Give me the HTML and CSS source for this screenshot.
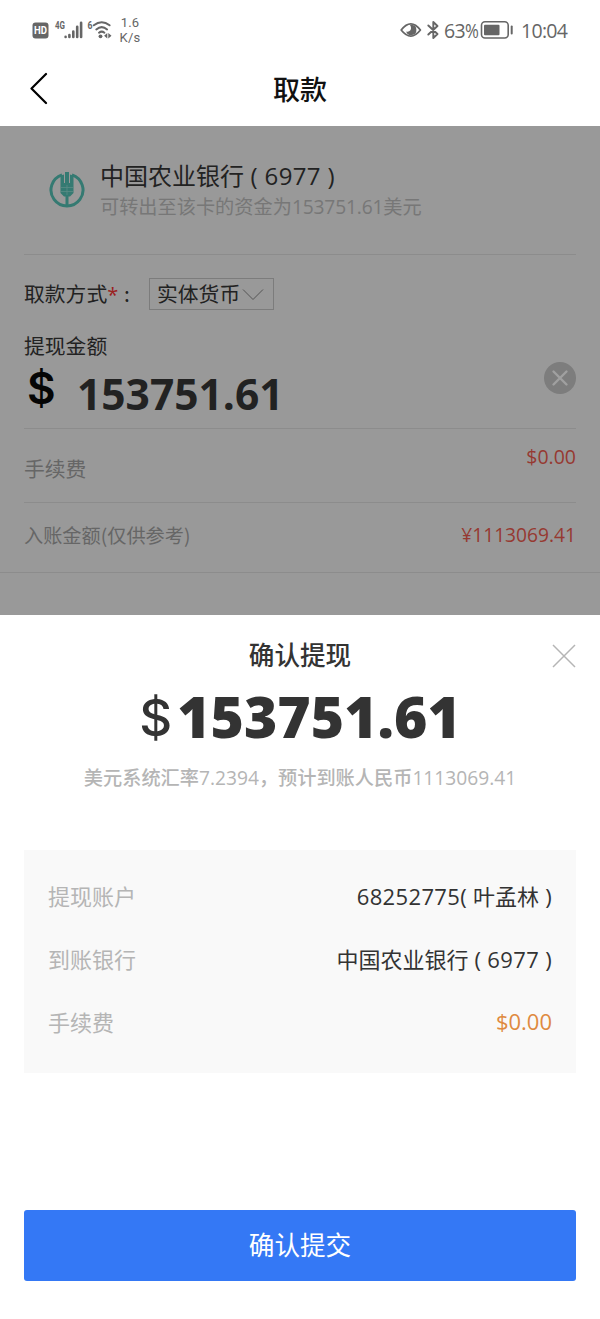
FILE: index.html
```html
<!DOCTYPE html>
<html lang="zh-CN">
<head>
<meta charset="utf-8">
<title>取款</title>
<link rel="stylesheet" href="styles.css">
</head>
<body>
<header class="status">
  <div class="status-left">
    <svg class="radio" width="82" height="24" viewBox="0 0 82 24">
      <rect x="1.500" y="4.500" width="16" height="16" rx="3" fill="#666"/>
      <text x="9.500" y="16.400" class="hd" text-anchor="middle" textLength="13" lengthAdjust="spacingAndGlyphs">HD</text>
      <text x="24" y="11" class="tiny" textLength="10" lengthAdjust="spacingAndGlyphs">4G</text>
      <g stroke="#666" stroke-width="2.600" stroke-linecap="round">
        <path d="M34.600 18.900v.1M38.400 17v2M42.300 13.500v5.500M46.200 8.800v10.200M50.100 4.700v14.300"/>
      </g>
      <text x="56.500" y="11" class="tiny" textLength="5" lengthAdjust="spacingAndGlyphs">6</text>
      <g fill="none" stroke="#666" stroke-width="2" stroke-linecap="round">
        <path d="M62.800 7.300q7.900-6 15.800 0M65.300 11.400q5.400-4.500 10.800 0M68 14.700q2.700-2.200 5.400 0"/>
      </g>
      <circle cx="69.500" cy="18.300" r="1.900" fill="#666"/>
      <path d="M76.300 15v5.400l-3.200-2.700zM77.300 15v5.400l3.200-2.700z" fill="#666"/>
    </svg>
    <div class="speed"><span>1.6</span><span>K/s</span></div>
  </div>
  <div class="status-right">
    <svg width="42" height="24" viewBox="0 0 42 24">
      <path d="M1.200 12Q10.800-.3 20.400 12Q10.800 24.300 1.200 12z" fill="none" stroke="#666" stroke-width="1.800" stroke-linejoin="round"/>
      <path d="M11.500 6.800a5.200 5.200 0 1 1-5.300 6.600q2.400.8 4-.8 1.800-2.400-.2-5.500z" fill="#666"/>
      <path d="M28.300 7.500l9.200 8.500-4.200 4V4l4.200 4-9.200 8.500" fill="none" stroke="#666" stroke-width="1.900" stroke-linejoin="round" stroke-linecap="round"/>
    </svg>
    <span class="pct">63<span class="percent">%</span></span>
    <svg width="34" height="20" viewBox="0 0 34 20">
      <rect x="1.500" y="1.700" width="26.700" height="16.300" rx="3.500" fill="none" stroke="#666" stroke-width="1.600"/>
      <rect x="4" y="4.700" width="15.500" height="10.600" rx="1" fill="#666"/>
      <path d="M31.700 6.500v7" stroke="#666" stroke-width="2" stroke-linecap="round"/>
    </svg>
    <span class="time">10:04</span>
  </div>
</header>
<nav class="nav">
  <svg class="back" width="20" height="34" viewBox="0 0 20 34"><path d="M16 3L1.500 17.500 16 32" fill="none" stroke="#000" stroke-width="2.200" stroke-linecap="round" stroke-linejoin="round"/></svg>
  <h1 class="nav-title">取款</h1>
</nav>
<main class="page">
  <section class="bank">
    <svg class="bank-logo" width="36" height="36" viewBox="0 0 36 36">
      <path d="M13 2.800a16 16 0 1 0 10 0" fill="none" stroke="#357a72" stroke-width="3"/>
      <path d="M16 0h4v11h1V2.500l3.500 1V21L21 24.500h-1.500v9h-3v-9H15L11.500 21V3.500l3.500-1V11h1z" fill="#357a72"/>
      <path d="M12 15.500h12M12 19.500h12M18 13v10" stroke="#5b8b85" stroke-width=".8"/>
    </svg>
    <div class="bank-info">
      <div class="bank-name">中国农业银行<span class="num wide"> ( 6977 )</span></div>
      <div class="bank-sub">可转出至该卡的资金为<span class="num">153751.61</span>美元</div>
    </div>
  </section>
  <section class="method">
    <span class="method-label">取款方式<b class="star">*</b></span><span class="colon">:</span>
    <span class="select">实体货币<svg width="22" height="14" viewBox="0 0 22 14"><path d="M1 1.500l10 10 10-10" fill="none" stroke="#555" stroke-width="1"/></svg></span>
  </section>
  <section class="amount">
    <div class="amount-label">提现金额</div>
    <div class="amount-row">
      <span class="amount-sign">$</span><span class="amount-value">153751.61</span>
      <svg class="clear" width="32" height="32" viewBox="0 0 32 32"><circle cx="16" cy="16" r="16" fill="#7d7d7d"/><path d="M9.500 9.500l13 13M22.500 9.500l-13 13" stroke="#a0a0a0" stroke-width="2.400" stroke-linecap="round"/></svg>
    </div>
  </section>
  <section class="fee"><span class="fee-label">手续费</span><span class="fee-value">$0.00</span></section>
  <section class="credit"><span>入账金额(仅供参考)</span><span class="credit-value">¥1113069.41</span></section>
</main>
<section class="sheet">
  <div class="sheet-head">
    <h2 class="sheet-title">确认提现</h2>
    <svg class="close" width="24" height="24" viewBox="0 0 24 24"><path d="M1 1l22 22M23 1L1 23" stroke="#b5b5b5" stroke-width="1.500"/></svg>
  </div>
  <div class="total"><span class="total-sign">$</span><span class="total-value">153751.61</span></div>
  <p class="note">美元系统汇率<span class="num">7.2394</span>，预计到账人民币<span class="num">1113069.41</span></p>
  <dl class="details">
    <div class="row"><dt>提现账户</dt><dd><span class="num wide">68252775( </span>叶孟林<span class="num wide"> )</span></dd></div>
    <div class="row"><dt>到账银行</dt><dd>中国农业银行<span class="num wide"> ( 6977 )</span></dd></div>
    <div class="row"><dt>手续费</dt><dd class="orange">$0.00</dd></div>
  </dl>
  <button class="submit">确认提交</button>
</section>
</body>
</html>
```
FILE: styles.css
```css
* { box-sizing: border-box; }
body {
  margin: 0;
  width: 600px;
  height: 1319px;
  background: #fff;
  color: #333;
  font-family: "Noto Sans CJK SC", sans-serif;
  overflow: hidden;
}
h1, h2, p, dl, dd { margin: 0; font-weight: 400; }
.num { font-family: "Open Sans", "Noto Sans CJK SC", sans-serif; }
.wide { letter-spacing: .35px; }
.status {
  height: 60px;
  padding: 0 33px 0 31px;
  display: flex;
  align-items: center;
  justify-content: space-between;
  color: #666;
}
.status-left, .status-right { display: flex; align-items: center; }
.radio { margin-top: -1px; }
.hd { font: 700 10.500px Roboto, sans-serif; fill: #fff; }
.tiny { font: 700 10px Roboto, sans-serif; fill: #666; }
.speed {
  margin-left: 7px;
  width: 20px;
  display: flex;
  flex-direction: column;
  align-items: center;
  font: 13px/15px Roboto, sans-serif;
  letter-spacing: .2px;
}
.pct, .time { font: 19.500px/24px "Open Sans", sans-serif; margin-top: 1px; }
.pct { margin-left: 2px; width: 36px; letter-spacing: -.600px; white-space: nowrap; }
.percent { display: inline-block; transform: scaleX(.86); transform-origin: 0 50%; }
.time { margin-left: 7px; width: 46px; letter-spacing: -.700px; white-space: nowrap; }
.nav {
  height: 66px;
  padding: 11px 30px 0;
  display: grid;
  grid-template-columns: 20px 1fr 20px;
  align-items: start;
}
.nav-title { font-size: 27px; font-weight: 500; line-height: 36px; text-align: center; color: #111; }
.page {
  height: 489px;
  padding: 0 24px;
  background: #999;
  color: #222;
}
.bank { height: 129px; padding: 33px 0 0 25px; display: flex; border-bottom: 1px solid #8c8c8c; }
.bank-logo { margin: 13px 15px 0 0; }
.bank-name { font-size: 24px; line-height: 32px; }
.bank-sub { font-size: 19.200px; line-height: 28px; color: #777; }
.bank-sub .num { letter-spacing: -.15px; }
.method { height: 75px; padding-top: 23px; display: flex; font-size: 20.800px; line-height: 30px; }
.star { font: 500 20px/20px "Open Sans", sans-serif; color: #9b2020; }
.colon { width: 32px; padding-left: 7px; }
.method-label { width: 93px; white-space: nowrap; }
.select {
  width: 125px;
  height: 32px;
  padding: 0 0 2px 7px;
  border: 1px solid #7c7c7c;
  display: flex;
  align-items: center;
  gap: 2px;
  line-height: 28px;
}
.select svg { margin-top: 4px; }
.amount { height: 99px; border-bottom: 1px solid #8c8c8c; }
.amount-label { font-size: 20.800px; line-height: 30px; }
.amount-row { height: 68px; display: flex; align-items: flex-start; }
.amount-sign { width: 53px; padding-left: 3px; font: 600 44px/56px Inter, sans-serif; color: #050505; }
.amount-value { flex: 1; font: 700 42.500px/67px "Open Sans", sans-serif; }
.clear { margin-top: 2px; }
.fee {
  height: 74px;
  padding: 12px 0 0;
  display: flex;
  justify-content: space-between;
  border-bottom: 1px solid #8c8c8c;
  font-size: 20.800px;
}
.fee-label { padding-top: 11px; line-height: 32px; color: #666; }
.fee-value, .credit-value { font-family: "Open Sans", sans-serif; font-size: 19.500px; line-height: 32px; color: #963932; }
.credit-value { font-size: 19.200px; }
.credit {
  height: 70px;
  margin: 0 -24px;
  padding: 16px 24px;
  display: flex;
  justify-content: space-between;
  border-bottom: 1px solid #8c8c8c;
  font-size: 19.200px;
  line-height: 32px;
  color: #666;
}
.sheet { height: 704px; padding: 22px 24px 38px; display: flex; flex-direction: column; }
.sheet-head { display: grid; grid-template-columns: 24px 1fr 24px; align-items: center; height: 34px; }
.sheet-title { grid-column: 2; font-size: 25.600px; font-weight: 500; line-height: 32px; text-align: center; }
.close { margin-top: 3px; }
.total { height: 91px; display: flex; justify-content: center; line-height: 90px; }
.total-sign { font-family: Inter, sans-serif; font-size: 51px; font-weight: 500; line-height: 93px; width: 38px; }
.total-value { font-family: "Open Sans", sans-serif; font-size: 57px; font-weight: 800; }
.note { font-size: 19.200px; font-weight: 500; line-height: 30px; text-align: center; color: #b5b5b5; white-space: nowrap; }
.note .num { font-weight: 500; }
.details { margin-top: 57px; height: 223px; padding: 14px 24px; background: #f9f9f9; font-size: 22px; }
.row { height: 63px; display: flex; justify-content: space-between; line-height: 63px; white-space: nowrap; }
.row dt { color: #b5b5b5; }
.row .orange { font-family: "Open Sans", sans-serif; color: #df8a40; }
.submit {
  margin-top: auto;
  height: 71px;
  padding: 0 0 3px;
  border: 0;
  border-radius: 3px;
  background: #3478f5;
  color: #fff;
  font: 400 25.600px/32px "Noto Sans CJK SC", sans-serif;
}
```
